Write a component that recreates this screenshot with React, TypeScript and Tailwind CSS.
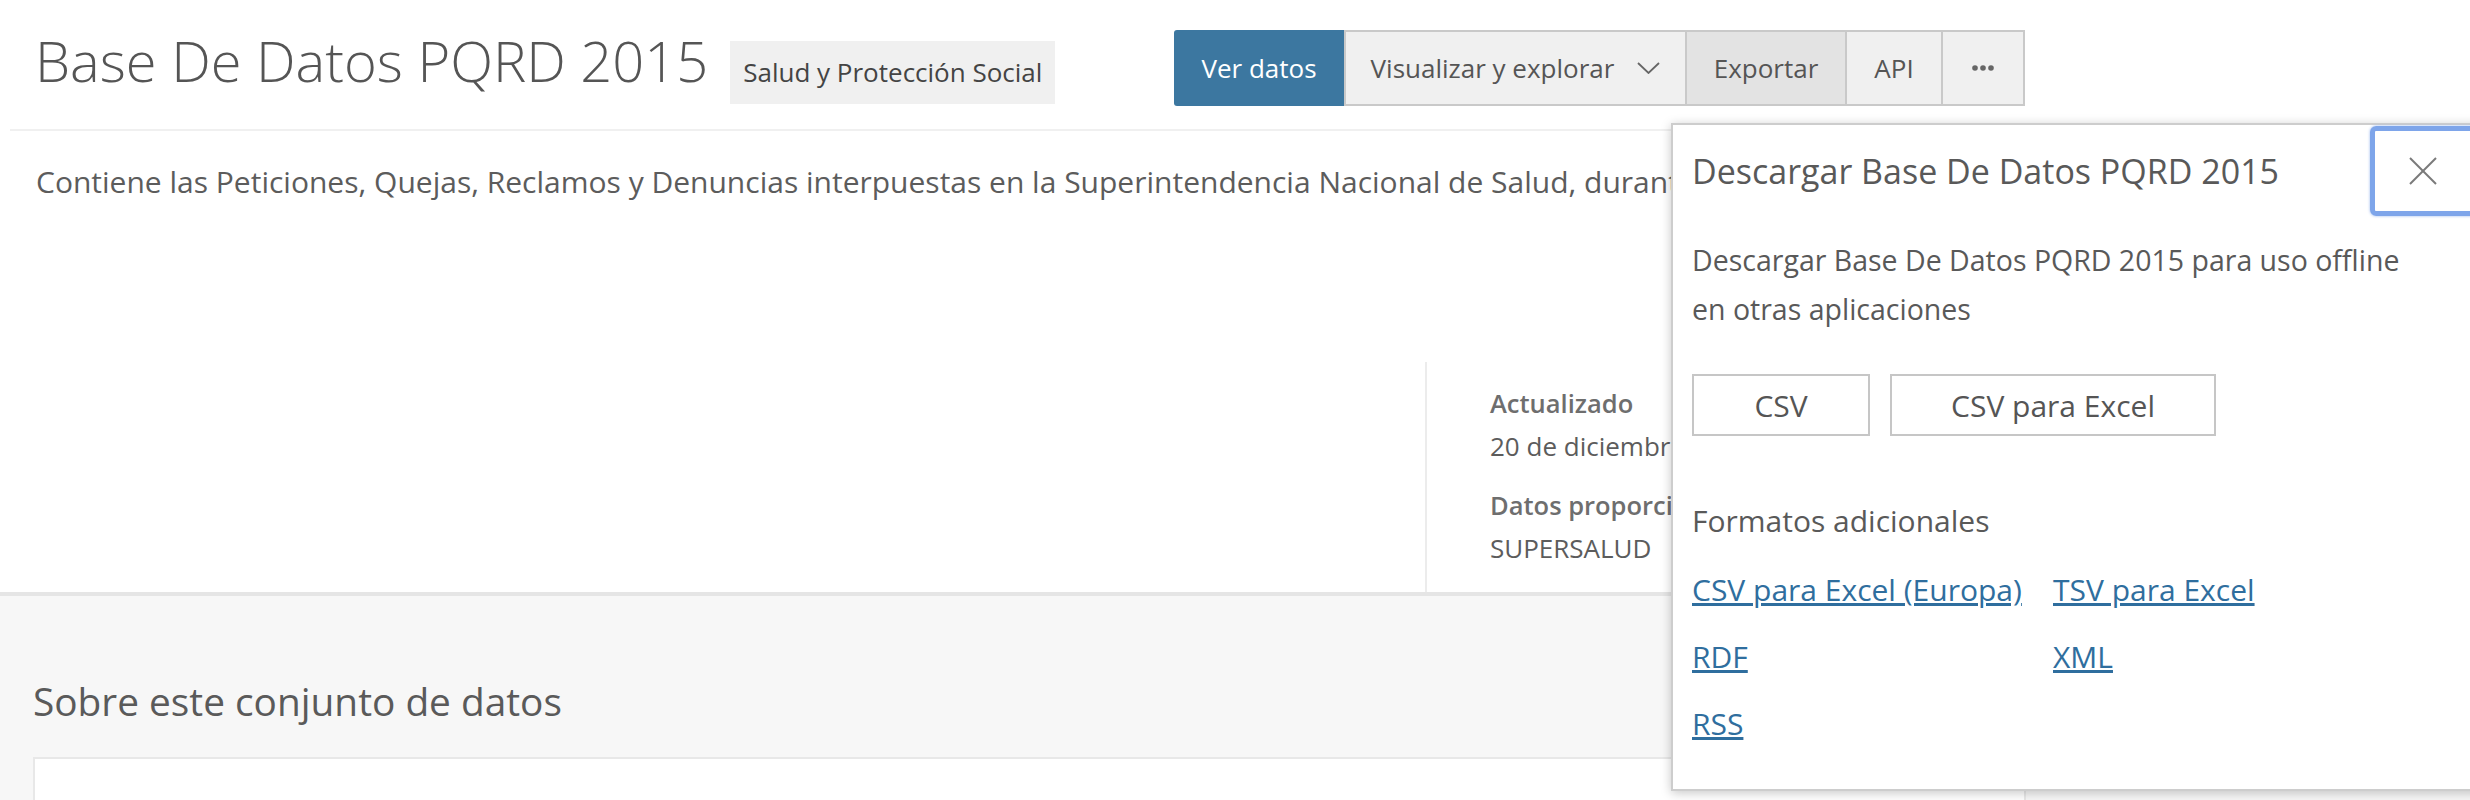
import React from 'react';

const links = ['CSV para Excel (Europa)', 'TSV para Excel', 'RDF', 'XML', 'RSS'];

function DownloadPanel() {
  return (
    <div className="absolute left-[1671px] top-[123px] w-[830px] bg-white border-2 border-[#cdcdcd] shadow-[0_2px_10px_rgba(0,0,0,0.22)]">
      <div className="flex justify-between items-start">
        <h2 className="pl-[19px] pt-[23px] text-[34px] leading-[46px] text-[#595959]">
          Descargar Base De Datos PQRD 2015
        </h2>
        <button className="mt-[1px] mr-[21px] w-[108px] h-[90px] rounded-[6px] border-[5px] border-[#7ea5ea] shadow-[0_0_3px_#9ab8ef] flex items-center justify-center pr-[2px]">
          <svg width="28" height="28" viewBox="0 0 28 28">
            <line x1="1" y1="1" x2="27" y2="27" stroke="#7a7a7a" strokeWidth="2" />
            <line x1="27" y1="1" x2="1" y2="27" stroke="#7a7a7a" strokeWidth="2" />
          </svg>
        </button>
      </div>
      <div className="px-[19px] pb-[41px]">
        <p className="mt-[20px] w-[740px] text-[28.5px] leading-[49px] text-[#595959]">
          Descargar Base De Datos PQRD 2015 para uso offline en otras aplicaciones
        </p>
        <div className="flex gap-[20px] mt-[40px]">
          <button className="w-[178px] h-[62px] border-2 border-[#c6c6c6] text-[30px] text-[#555]">
            CSV
          </button>
          <button className="w-[326px] h-[62px] border-2 border-[#c6c6c6] text-[30px] text-[#555]">
            CSV para Excel
          </button>
        </div>
        <p className="mt-[60px] text-[30px] leading-[49px] text-[#595959]">Formatos adicionales</p>
        <div className="grid grid-cols-[361px_auto] gap-y-[18px] mt-[20px]">
          {links.map((l) => (
            <a key={l} href="#" className="text-[30px] leading-[49px] text-[#2f6e9e] underline w-fit">
              {l}
            </a>
          ))}
        </div>
      </div>
    </div>
  );
}

export default function App() {
  return (
    <div className="relative w-[2470px] h-[800px] overflow-hidden bg-[#f7f7f7] font-['Open_Sans',sans-serif]">
      <div className="bg-white border-b-4 border-[#e5e5e5]">
        <div className="mx-[10px] border-b-2 border-[#f0f0f0]">
          <div className="w-[2015px] h-[129px] flex justify-between pl-[25px]">
            <div className="flex items-baseline gap-[22px] pt-[27px] self-start">
              <h1 className="text-[56px] leading-[67px] font-light text-[#555]">Base De Datos PQRD 2015</h1>
              <span className="bg-[#f0f0f0] px-[13px] text-[26px] leading-[63px] text-[#444]">
                Salud y Protección Social
              </span>
            </div>
            <div className="flex mt-[30px] h-[76px] self-start text-[26px]">
              <button className="w-[170px] rounded-l-[3px] bg-[#3c77a0] text-white">Ver datos</button>
              <button className="w-[343px] flex items-center justify-center gap-[23px] bg-[#f0f0f0] border-2 border-[#c9c9c9] text-[#555]">
                Visualizar y explorar
                <svg width="23" height="12" viewBox="0 0 23 12">
                  <polyline points="1,1 11.5,11 22,1" fill="none" stroke="#666" strokeWidth="1.8" />
                </svg>
              </button>
              <button className="w-[160px] bg-[#e3e3e3] border-y-2 border-r-2 border-[#c9c9c9] text-[#555]">Exportar</button>
              <button className="w-[96px] bg-[#f0f0f0] border-y-2 border-r-2 border-[#c9c9c9] text-[#555]">API</button>
              <button className="w-[82px] flex items-center justify-center bg-[#f0f0f0] border-y-2 border-r-2 border-[#c9c9c9]">
                <svg width="22" height="6" viewBox="0 0 22 6">
                  <circle cx="3" cy="3" r="2.8" fill="#666" />
                  <circle cx="11" cy="3" r="2.8" fill="#666" />
                  <circle cx="19" cy="3" r="2.8" fill="#666" />
                </svg>
              </button>
            </div>
          </div>
        </div>
        <p className="pl-[36px] mt-[28px] text-[30px] leading-[45px] text-[#5c5c5c] whitespace-nowrap">
          Contiene las Peticiones, Quejas, Reclamos y Denuncias interpuestas en la Superintendencia Nacional de Salud, durante el año 2015.
        </p>
        <div className="flex mt-[158px] h-[230px]">
          <div className="w-[1425px]" />
          <div className="w-[601px] border-l-2 border-[#ececec] pl-[63px] pt-[20px] whitespace-nowrap">
            <div className="text-[25.5px] leading-[43px] font-semibold text-[#6e6e6e]">Actualizado</div>
            <div className="text-[26px] leading-[43px] text-[#5c5c5c]">20 de diciembre de 2019</div>
            <div className="mt-[16px] text-[25.5px] leading-[43px] font-semibold text-[#6e6e6e]">Datos proporcionados por</div>
            <div className="text-[26px] leading-[43px] text-[#5c5c5c]">SUPERSALUD</div>
          </div>
        </div>
      </div>
      <div className="pt-[81px] pl-[33px]">
        <h2 className="text-[38.8px] leading-[48px] text-[#5a5a5a]">Sobre este conjunto de datos</h2>
        <div className="mt-[32px] w-[1993px] h-[200px] bg-white border-2 border-[#e8e8e8]" />
      </div>
      <DownloadPanel />
    </div>
  );
}
